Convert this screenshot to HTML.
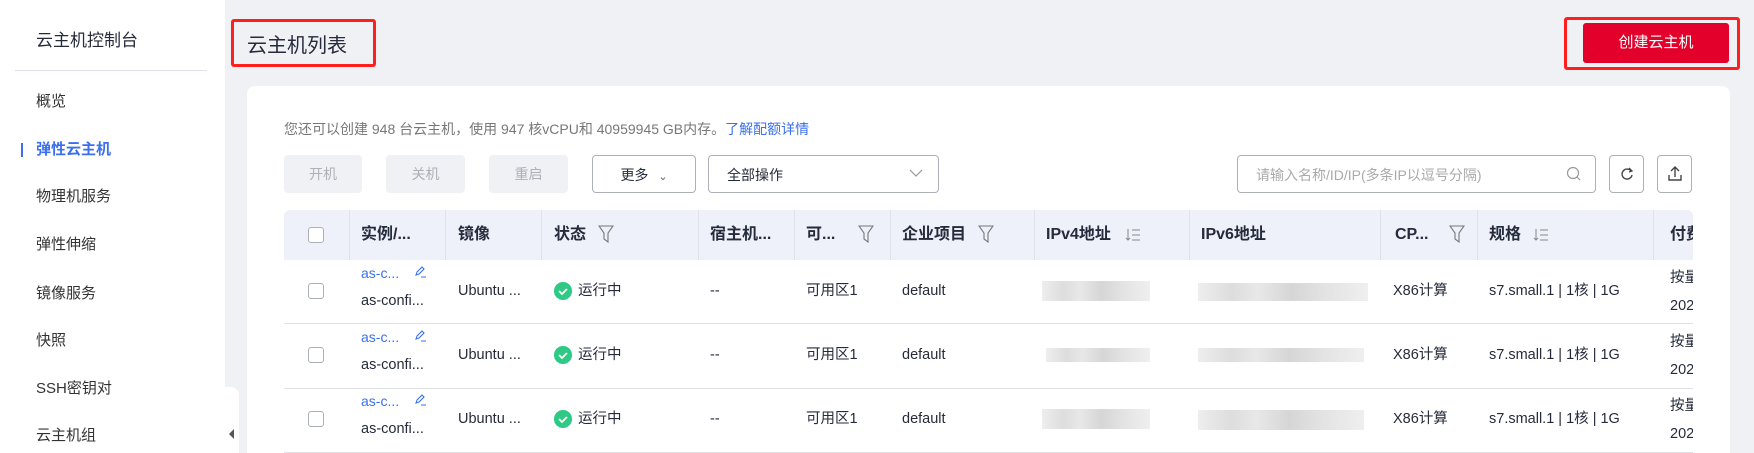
<!DOCTYPE html>
<html><head><meta charset="utf-8"><style>
*{margin:0;padding:0;box-sizing:border-box}
html,body{width:1754px;height:453px;overflow:hidden}
body{background:#f0f1f5;font-family:"Liberation Sans","Noto Sans CJK SC",sans-serif;position:relative;color:#252b3a}
.a{position:absolute;white-space:nowrap}
.side{left:0;top:0;width:225px;height:453px;background:#fff}
.mi{left:36px;font-size:15px;color:#333;line-height:20px}
.card{left:247px;top:86px;width:1483px;height:380px;background:#fff;border-radius:8px}
.btn{top:155px;height:38px;border-radius:4px;font-size:14px;line-height:38px;text-align:center}
.g{background:#f0f1f5;color:#adb0b8}
.w{background:#fff;border:1px solid #adb0b8;color:#252b3a}
.th{top:210px;height:50px;background:#eef1fa}
.ht{top:225px;font-size:16px;font-weight:bold;line-height:20px;color:#252b3a}
.sep{top:210px;width:1px;height:50px;background:#dfe1e6}
.rl{left:284px;width:1409px;height:1px;background:#dfe1e6}
.t{font-size:14.5px;color:#252b3a;line-height:20px}
.cb{left:308px;width:16px;height:16px;border:1px solid #adb0b8;border-radius:3px;background:#fff}
.blur{background:linear-gradient(90deg,#eee,#ddd 20%,#e8e8e8 35%,#d6d6d6 55%,#e3e3e3 75%,#efefef)}
</style></head><body>
<div class="a side"></div>
<div class="a" style="left:36px;top:30px;font-size:17px;line-height:22px;color:#252b3a">云主机控制台</div>
<div class="a" style="left:15px;top:70px;width:192px;height:1px;background:#dfe1e6"></div>
<div class="a mi" style="top:92px">概览</div>
<div class="a" style="left:21px;top:143px;width:2px;height:14px;background:#3b6ff0"></div>
<div class="a mi" style="top:140px;font-weight:bold;color:#3b6ff0">弹性云主机</div>
<div class="a mi" style="top:187px">物理机服务</div>
<div class="a mi" style="top:235px">弹性伸缩</div>
<div class="a mi" style="top:284px">镜像服务</div>
<div class="a mi" style="top:331px">快照</div>
<div class="a mi" style="top:379px">SSH密钥对</div>
<div class="a mi" style="top:426px">云主机组</div>
<div class="a" style="left:225px;top:387px;width:14px;height:70px;background:#fff;border-radius:0 8px 0 0"></div>
<div class="a" style="left:229px;top:429px;width:0;height:0;border-top:5px solid transparent;border-bottom:5px solid transparent;border-right:5px solid #555"></div>

<div class="a" style="left:231px;top:19px;width:145px;height:48px;border:3px solid #ff1f1f;border-radius:3px"></div>
<div class="a" style="left:247px;top:33px;font-size:20px;line-height:26px;color:#252b3a">云主机列表</div>
<div class="a" style="left:1564px;top:17px;width:176px;height:53px;border:3px solid #ff1f1f;border-radius:3px"></div>
<div class="a" style="left:1583px;top:23px;width:146px;height:40px;background:#e3002b;border-radius:3px;color:#fff;font-size:15px;line-height:40px;text-align:center">创建云主机</div>

<div class="a card"></div>
<div class="a" style="left:284px;top:120px;font-size:14px;line-height:18px;color:#777">您还可以创建 948 台云主机，使用 947 核vCPU和 40959945 GB内存。<span style="color:#3b6ff0">了解配额详情</span></div>
<div class="a btn g" style="left:284px;width:78px">开机</div>
<div class="a btn g" style="left:386px;width:79px">关机</div>
<div class="a btn g" style="left:489px;width:79px">重启</div>
<div class="a btn w" style="left:592px;width:104px">更多 <span style="font-size:11px;color:#666;margin-left:6px">&#8964;</span></div>
<div class="a btn w" style="left:708px;width:231px;text-align:left;padding-left:18px">全部操作</div>
<svg class="a" style="left:909px;top:168px" width="14" height="10"><path d="M1 2l6 6 6-6" fill="none" stroke="#999" stroke-width="1.2"/></svg>
<div class="a btn w" style="left:1237px;width:359px;text-align:left;padding-left:18px;color:#aaa;font-size:14px">请输入名称/ID/IP(多条IP以逗号分隔)</div>
<svg class="a" style="left:1566px;top:166px" width="16" height="16"><circle cx="7" cy="7" r="5.5" fill="none" stroke="#999" stroke-width="1.2"/><path d="M11 11l3 3" stroke="#999" stroke-width="1.2"/></svg>
<div class="a btn w" style="left:1609px;width:35px"></div>
<svg class="a" style="left:1619px;top:166px" width="16" height="16"><path d="M12 5A5 5 0 1 0 13 9" fill="none" stroke="#444" stroke-width="1.4"/><path d="M10 2l3 3-3 1" fill="none" stroke="#444" stroke-width="1.3"/></svg>
<div class="a btn w" style="left:1657px;width:35px"></div>
<svg class="a" style="left:1666px;top:164px" width="18" height="18"><path d="M9 13V3M5 7l4-4 4 4M3 11v5h12v-5" fill="none" stroke="#444" stroke-width="1.4"/></svg>

<div class="a th" style="left:284px;width:1409px;border-radius:6px 6px 0 0"></div>
<div class="a sep" style="left:349px"></div><div class="a sep" style="left:445px"></div><div class="a sep" style="left:541px"></div><div class="a sep" style="left:698px"></div><div class="a sep" style="left:794px"></div><div class="a sep" style="left:890px"></div><div class="a sep" style="left:1034px"></div><div class="a sep" style="left:1189px"></div><div class="a sep" style="left:1380px"></div><div class="a sep" style="left:1477px"></div><div class="a sep" style="left:1653px"></div>
<div class="a cb" style="top:227px"></div>
<div class="a ht" style="left:361px">实例/...</div>
<div class="a ht" style="left:458px">镜像</div>
<div class="a ht" style="left:554px">状态</div>
<div class="a ht" style="left:710px">宿主机...</div>
<div class="a ht" style="left:806px">可...</div>
<div class="a ht" style="left:902px">企业项目</div>
<div class="a ht" style="left:1046px">IPv4地址</div>
<div class="a ht" style="left:1201px">IPv6地址</div>
<div class="a ht" style="left:1395px">CP...</div>
<div class="a ht" style="left:1489px">规格</div>
<div class="a" style="left:1653px;top:210px;width:40px;height:50px;overflow:hidden"><div class="a ht" style="left:17px;top:15px">付费</div></div>
<svg class="a" style="left:598px;top:225px" width="16" height="18"><path d="M1 1h14l-5 7v9l-4-3V8z" fill="none" stroke="#777" stroke-width="1.1"/></svg>
<svg class="a" style="left:858px;top:225px" width="16" height="18"><path d="M1 1h14l-5 7v9l-4-3V8z" fill="none" stroke="#777" stroke-width="1.1"/></svg>
<svg class="a" style="left:978px;top:225px" width="16" height="18"><path d="M1 1h14l-5 7v9l-4-3V8z" fill="none" stroke="#777" stroke-width="1.1"/></svg>
<svg class="a" style="left:1449px;top:225px" width="16" height="18"><path d="M1 1h14l-5 7v9l-4-3V8z" fill="none" stroke="#777" stroke-width="1.1"/></svg>
<svg class="a" style="left:1125px;top:228px" width="16" height="14"><path d="M3 1v11M1 10l2 2 2-2M7 2h8M7 7h8M7 12h8" fill="none" stroke="#888" stroke-width="1"/></svg>
<svg class="a" style="left:1533px;top:228px" width="16" height="14"><path d="M3 1v11M1 10l2 2 2-2M7 2h8M7 7h8M7 12h8" fill="none" stroke="#888" stroke-width="1"/></svg>

<div class="a rl" style="top:323px"></div>
<div class="a rl" style="top:388px"></div>
<div class="a rl" style="top:452px"></div>

<div class="a cb" style="top:283px"></div><div class="a cb" style="top:347px"></div><div class="a cb" style="top:411px"></div>
<div class="a t" style="left:361px;top:263px;color:#3b6ff0;font-size:14px">as-c...</div>
<div class="a t" style="left:361px;top:327px;color:#3b6ff0;font-size:14px">as-c...</div>
<div class="a t" style="left:361px;top:391px;color:#3b6ff0;font-size:14px">as-c...</div>
<svg class="a" style="left:413px;top:265px" width="14" height="14"><path d="M3 10l1-3 5-5 2 2-5 5zM8 12h5" fill="none" stroke="#3b6ff0" stroke-width="1.1"/></svg>
<svg class="a" style="left:413px;top:329px" width="14" height="14"><path d="M3 10l1-3 5-5 2 2-5 5zM8 12h5" fill="none" stroke="#3b6ff0" stroke-width="1.1"/></svg>
<svg class="a" style="left:413px;top:393px" width="14" height="14"><path d="M3 10l1-3 5-5 2 2-5 5zM8 12h5" fill="none" stroke="#3b6ff0" stroke-width="1.1"/></svg>
<div class="a t" style="left:361px;top:291px">as-confi...</div>
<div class="a t" style="left:361px;top:355px">as-confi...</div>
<div class="a t" style="left:361px;top:419px">as-confi...</div>
<div class="a t" style="left:458px;top:281px">Ubuntu ...</div>
<div class="a t" style="left:458px;top:345px">Ubuntu ...</div>
<div class="a t" style="left:458px;top:409px">Ubuntu ...</div>
<svg class="a" style="left:554px;top:282px" width="18" height="18"><circle cx="9" cy="9" r="9" fill="#2dc985"/><path d="M5 9l3 3 5-5" fill="none" stroke="#fff" stroke-width="1.8"/></svg>
<svg class="a" style="left:554px;top:346px" width="18" height="18"><circle cx="9" cy="9" r="9" fill="#2dc985"/><path d="M5 9l3 3 5-5" fill="none" stroke="#fff" stroke-width="1.8"/></svg>
<svg class="a" style="left:554px;top:410px" width="18" height="18"><circle cx="9" cy="9" r="9" fill="#2dc985"/><path d="M5 9l3 3 5-5" fill="none" stroke="#fff" stroke-width="1.8"/></svg>
<div class="a t" style="left:578px;top:281px">运行中</div>
<div class="a t" style="left:578px;top:345px">运行中</div>
<div class="a t" style="left:578px;top:409px">运行中</div>
<div class="a t" style="left:710px;top:281px">--</div><div class="a t" style="left:710px;top:345px">--</div><div class="a t" style="left:710px;top:409px">--</div>
<div class="a t" style="left:806px;top:281px">可用区1</div><div class="a t" style="left:806px;top:345px">可用区1</div><div class="a t" style="left:806px;top:409px">可用区1</div>
<div class="a t" style="left:902px;top:281px">default</div><div class="a t" style="left:902px;top:345px">default</div><div class="a t" style="left:902px;top:409px">default</div>
<div class="a blur" style="left:1042px;top:281px;width:108px;height:20px"></div>
<div class="a blur" style="left:1046px;top:348px;width:104px;height:14px"></div>
<div class="a blur" style="left:1042px;top:409px;width:108px;height:20px"></div>
<div class="a blur" style="left:1198px;top:283px;width:170px;height:18px"></div>
<div class="a blur" style="left:1198px;top:348px;width:166px;height:14px"></div>
<div class="a blur" style="left:1198px;top:410px;width:166px;height:20px"></div>
<div class="a t" style="left:1393px;top:281px">X86计算</div><div class="a t" style="left:1393px;top:345px">X86计算</div><div class="a t" style="left:1393px;top:409px">X86计算</div>
<div class="a t" style="left:1489px;top:281px">s7.small.1 | 1核 | 1G</div><div class="a t" style="left:1489px;top:345px">s7.small.1 | 1核 | 1G</div><div class="a t" style="left:1489px;top:409px">s7.small.1 | 1核 | 1G</div>
<div class="a" style="left:1670px;top:260px;width:23px;height:193px;overflow:hidden">
<div class="a t" style="left:0;top:8px">按量</div><div class="a t" style="left:0;top:36px">2023</div>
<div class="a t" style="left:0;top:72px">按量</div><div class="a t" style="left:0;top:100px">2023</div>
<div class="a t" style="left:0;top:136px">按量</div><div class="a t" style="left:0;top:164px">2023</div>
</div>
</body></html>
